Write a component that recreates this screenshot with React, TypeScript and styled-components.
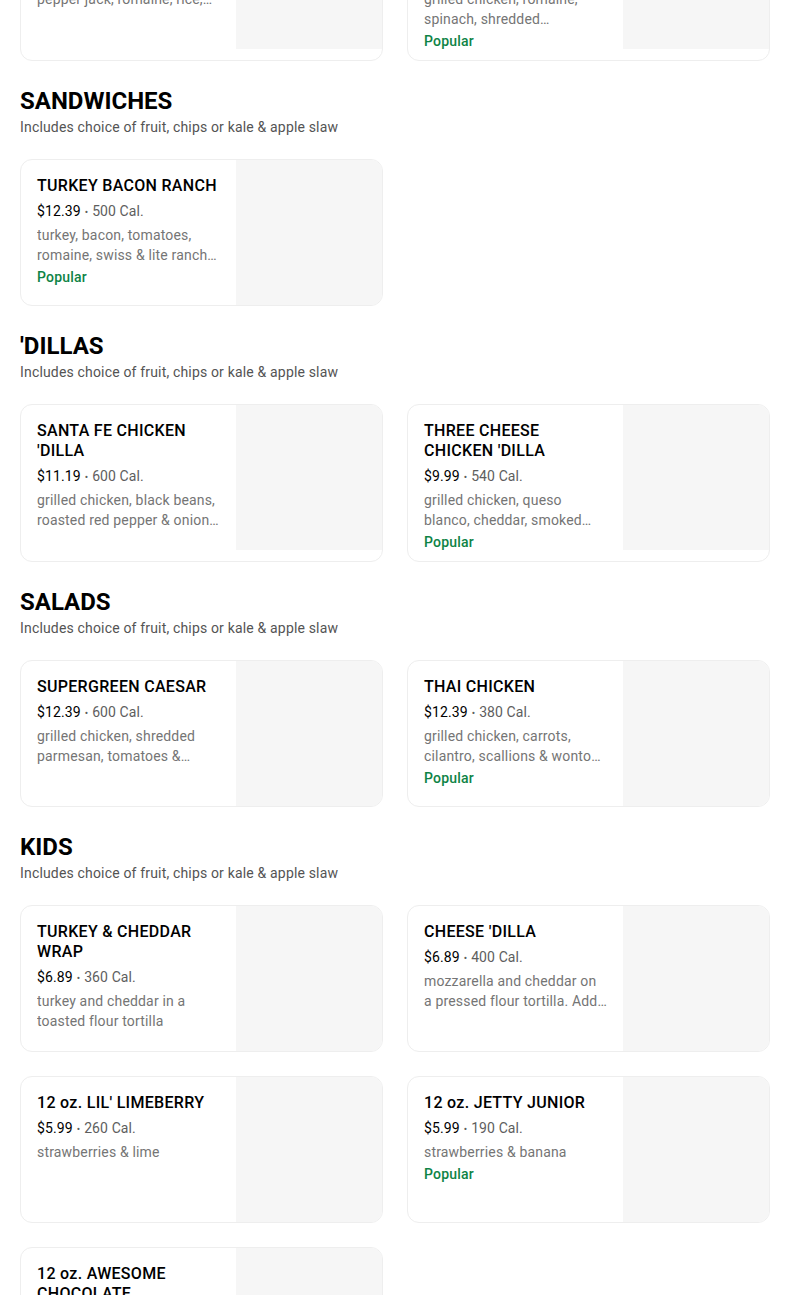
import React from 'react'
import styled, { createGlobalStyle } from 'styled-components'

type Item = {
  name: string
  price: string
  cal: string
  desc: string
  popular?: boolean
}

type Section = {
  title?: string
  subtitle?: string
  items: Item[]
}

const SIDES = 'Includes choice of fruit, chips or kale & apple slaw'

const sections: Section[] = [
  {
    items: [
      {
        name: 'BAJA CHICKEN WRAP',
        price: '$11.19',
        cal: '730 Cal.',
        desc: 'grilled chicken, black beans, pepper jack, romaine, rice, salsa & chipotle sauce',
      },
      {
        name: 'SUPERGREEN CAESAR WRAP',
        price: '$11.19',
        cal: '630 Cal.',
        desc: 'grilled chicken, romaine, spinach, shredded parmesan-romano, tomatoes & caesar',
        popular: true,
      },
    ],
  },
  {
    title: 'SANDWICHES',
    subtitle: SIDES,
    items: [
      {
        name: 'TURKEY BACON RANCH',
        price: '$12.39',
        cal: '500 Cal.',
        desc: 'turkey, bacon, tomatoes, romaine, swiss & lite ranch on toasted bread',
        popular: true,
      },
    ],
  },
  {
    title: "'DILLAS",
    subtitle: SIDES,
    items: [
      {
        name: "SANTA FE CHICKEN 'DILLA",
        price: '$11.19',
        cal: '600 Cal.',
        desc: 'grilled chicken, black beans, roasted red pepper & onion, mozzarella & cheddar',
      },
      {
        name: "THREE CHEESE CHICKEN 'DILLA",
        price: '$9.99',
        cal: '540 Cal.',
        desc: 'grilled chicken, queso blanco, cheddar, smoked gouda & mozzarella',
        popular: true,
      },
    ],
  },
  {
    title: 'SALADS',
    subtitle: SIDES,
    items: [
      {
        name: 'SUPERGREEN CAESAR',
        price: '$12.39',
        cal: '600 Cal.',
        desc: 'grilled chicken, shredded parmesan, tomatoes & caesar on kale & romaine',
      },
      {
        name: 'THAI CHICKEN',
        price: '$12.39',
        cal: '380 Cal.',
        desc: 'grilled chicken, carrots, cilantro, scallions & wonton strips with thai peanut',
        popular: true,
      },
    ],
  },
  {
    title: 'KIDS',
    subtitle: SIDES,
    items: [
      {
        name: 'TURKEY & CHEDDAR WRAP',
        price: '$6.89',
        cal: '360 Cal.',
        desc: 'turkey and cheddar in a toasted flour tortilla',
      },
      {
        name: "CHEESE 'DILLA",
        price: '$6.89',
        cal: '400 Cal.',
        desc: 'mozzarella and cheddar on a pressed flour tortilla. Add chicken for extra',
      },
      {
        name: "12 oz. LIL' LIMEBERRY",
        price: '$5.99',
        cal: '260 Cal.',
        desc: 'strawberries & lime',
      },
      {
        name: '12 oz. JETTY JUNIOR',
        price: '$5.99',
        cal: '190 Cal.',
        desc: 'strawberries & banana',
        popular: true,
      },
      {
        name: '12 oz. AWESOME CHOCOLATE',
        price: '$5.99',
        cal: '330 Cal.',
        desc: 'chocolate, banana & whey protein',
      },
    ],
  },
]

function App() {
  return (
    <>
      <GlobalStyle />
      <Page>
        {sections.map((section, i) => (
          <MenuSection key={i} $first={!section.title}>
            {section.title && (
              <>
                <Heading>{section.title}</Heading>
                <Subtitle>{section.subtitle}</Subtitle>
              </>
            )}
            <Grid $first={!section.title}>
              {section.items.map((item) => (
                <Card key={item.name}>
                  <Info>
                    <Name>{item.name}</Name>
                    <Meta>
                      <Price>{item.price}</Price>
                      <Dot>•</Dot>
                      <span>{item.cal}</span>
                    </Meta>
                    <Desc>{item.desc}</Desc>
                    {item.popular && <Popular>Popular</Popular>}
                  </Info>
                  <Thumb />
                </Card>
              ))}
            </Grid>
          </MenuSection>
        ))}
      </Page>
    </>
  )
}

export default App

const GlobalStyle = createGlobalStyle`
  html, body {
    margin: 0;
    padding: 0;
    background: #ffffff;
  }
  body {
    font-family: Roboto, "Liberation Sans", Arial, sans-serif;
    color: #000000;
    overflow: hidden;
  }
  * {
    box-sizing: border-box;
  }
`

// the screenshot is scrolled partway down the menu
const Page = styled.div`
  width: 750px;
  margin: -97px 0 0 20px;
  padding-bottom: 40px;
`

const MenuSection = styled.section<{ $first?: boolean }>`
  padding-top: ${(p) => (p.$first ? '0' : '24px')};
`

const Heading = styled.h2`
  margin: 0;
  font-size: 24px;
  line-height: 32px;
  font-weight: 700;
`

const Subtitle = styled.div`
  font-size: 14px;
  line-height: 20px;
  color: #545454;
  letter-spacing: 0.17px;
`

const Grid = styled.div<{ $first?: boolean }>`
  display: grid;
  grid-template-columns: repeat(2, 363px);
  column-gap: 24px;
  row-gap: 24px;
  margin-top: ${(p) => (p.$first ? '0' : '22px')};
`

const Card = styled.div`
  display: flex;
  min-height: 147px;
  border: 1px solid #eeeeee;
  border-radius: 12px;
  overflow: hidden;
  background: #ffffff;
`

const Info = styled.div`
  flex: 1;
  min-width: 0;
  padding: 16px 16px 9px;
  display: flex;
  flex-direction: column;
`

const Name = styled.div`
  font-size: 16px;
  line-height: 20px;
  font-weight: 500;
  letter-spacing: 0.3px;
  color: #000000;
`

const Meta = styled.div`
  margin-top: 5px;
  height: 20px;
  font-size: 14px;
  line-height: 20px;
  letter-spacing: 0.1px;
  color: #5e5e5e;
`

const Price = styled.span`
  color: #000000;
`

const Dot = styled.span`
  margin: 0 4px;
  font-size: 10px;
  line-height: 0;
`

const Desc = styled.div`
  margin-top: 4px;
  font-size: 14px;
  line-height: 20px;
  letter-spacing: 0.17px;
  color: #757575;
  display: -webkit-box;
  -webkit-line-clamp: 2;
  -webkit-box-orient: vertical;
  overflow: hidden;
`

const Popular = styled.div`
  margin-top: 2px;
  font-size: 14px;
  line-height: 20px;
  font-weight: 500;
  letter-spacing: 0.2px;
  color: #0e8345;
`

const Thumb = styled.div`
  flex: 0 0 146px;
  height: 145px;
  background: #f6f6f6;
`
